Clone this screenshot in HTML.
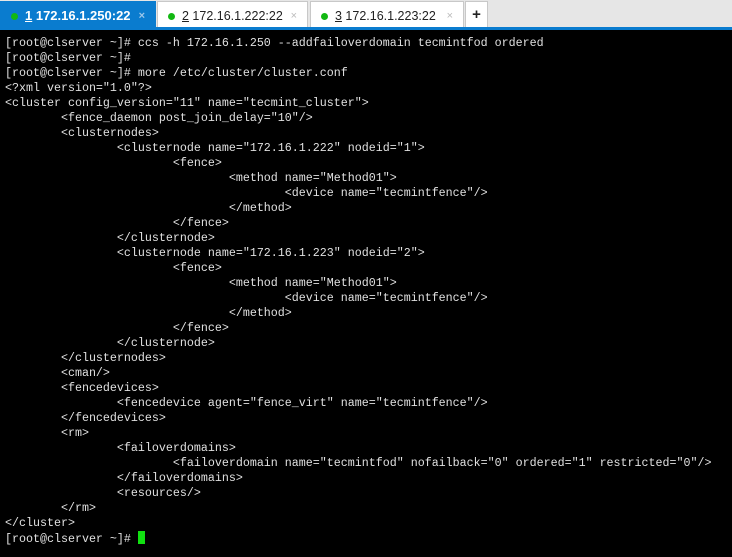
<!DOCTYPE html><html><head><style>
body{margin:0;width:732px;height:557px;background:#000;overflow:hidden;position:relative;font-family:"Liberation Sans",sans-serif}
.bar{position:absolute;left:0;top:0;width:732px;height:27px;background:#e6e6e6}
.line{position:absolute;left:0;top:27px;width:732px;height:3px;background:#0a7ccf}
.tab{position:absolute;top:1px;height:26px;background:#fff;border:1px solid #c8c8c8;border-bottom:none;box-sizing:border-box;font-size:12.5px;line-height:28px;color:#222}
.tab .d{position:absolute;left:10px;top:11px;width:7px;height:7px;border-radius:50%;background:#12b812}
.tab .t{position:absolute;left:24px}
.tab .x{position:absolute;right:10px;color:#bbb;font-size:11px}
.a{background:#0a7ccf;border-color:#0a7ccf;color:#fff;font-weight:bold;font-size:13px;height:27px}
.a .x{color:#9cc7ea}
pre{position:absolute;left:5px;top:36px;margin:0;color:#e0e0e0;font-family:"Liberation Mono",monospace;font-size:11.67px;line-height:15px}
.cur{display:inline-block;width:7px;height:13px;background:#11e011;vertical-align:-2px}
</style></head><body>
<div class="bar"></div><div class="line"></div>
<div class="tab a" style="left:0;width:156px"><span class="d"></span><span class="t"><u>1</u> 172.16.1.250:22</span><span class="x">×</span></div>
<div class="tab" style="left:157px;width:151px"><span class="d"></span><span class="t"><u>2</u> 172.16.1.222:22</span><span class="x">×</span></div>
<div class="tab" style="left:310px;width:154px"><span class="d"></span><span class="t"><u>3</u> 172.16.1.223:22</span><span class="x">×</span></div>
<div class="tab" style="left:465px;width:23px;text-align:center;font-weight:bold;font-size:15px;line-height:26px">+</div>
<pre>[root@clserver ~]# ccs -h 172.16.1.250 --addfailoverdomain tecmintfod ordered
[root@clserver ~]#
[root@clserver ~]# more /etc/cluster/cluster.conf
&lt;?xml version="1.0"?&gt;
&lt;cluster config_version="11" name="tecmint_cluster"&gt;
        &lt;fence_daemon post_join_delay="10"/&gt;
        &lt;clusternodes&gt;
                &lt;clusternode name="172.16.1.222" nodeid="1"&gt;
                        &lt;fence&gt;
                                &lt;method name="Method01"&gt;
                                        &lt;device name="tecmintfence"/&gt;
                                &lt;/method&gt;
                        &lt;/fence&gt;
                &lt;/clusternode&gt;
                &lt;clusternode name="172.16.1.223" nodeid="2"&gt;
                        &lt;fence&gt;
                                &lt;method name="Method01"&gt;
                                        &lt;device name="tecmintfence"/&gt;
                                &lt;/method&gt;
                        &lt;/fence&gt;
                &lt;/clusternode&gt;
        &lt;/clusternodes&gt;
        &lt;cman/&gt;
        &lt;fencedevices&gt;
                &lt;fencedevice agent="fence_virt" name="tecmintfence"/&gt;
        &lt;/fencedevices&gt;
        &lt;rm&gt;
                &lt;failoverdomains&gt;
                        &lt;failoverdomain name="tecmintfod" nofailback="0" ordered="1" restricted="0"/&gt;
                &lt;/failoverdomains&gt;
                &lt;resources/&gt;
        &lt;/rm&gt;
&lt;/cluster&gt;
[root@clserver ~]# <span class="cur"></span></pre>
</body></html>
